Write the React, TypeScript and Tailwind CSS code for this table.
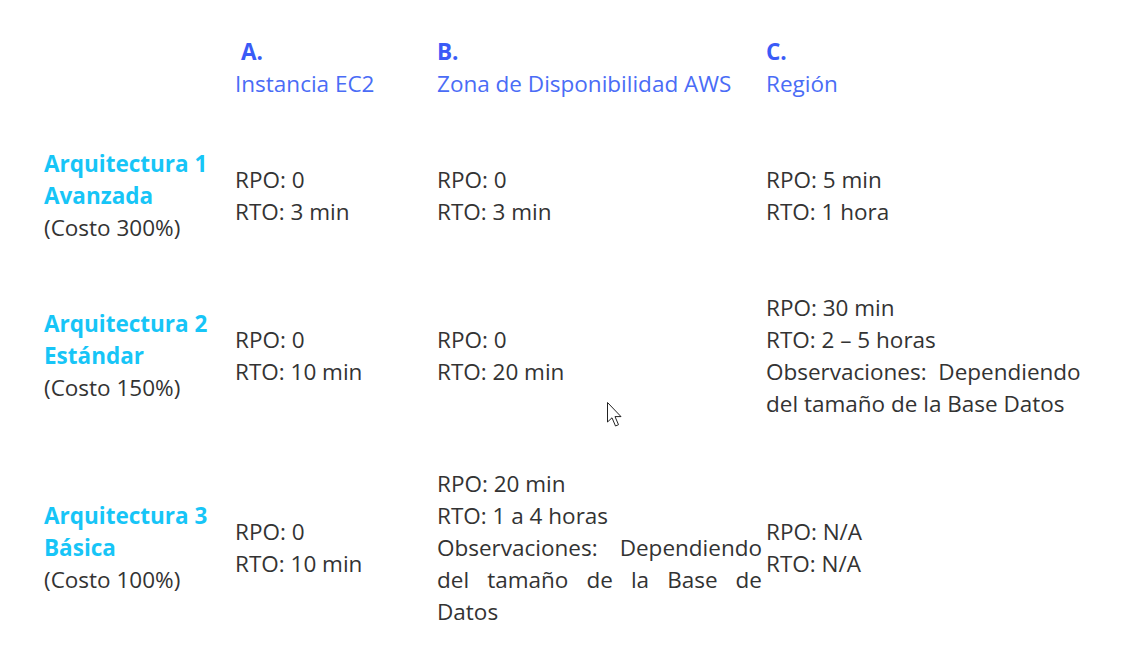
import React from "react";

const Cell = ({ lines }: { lines: string[] }) => (
  <div className="text-[#333333]">
    {lines.map((l, i) => (
      <div key={i} className="whitespace-pre">{l}</div>
    ))}
  </div>
);

const RowHead = ({ a, b, c }: { a: string; b: string; c: string }) => (
  <div>
    <div className="font-bold text-[#17c5f7]">{a}</div>
    <div className="font-bold text-[#17c5f7]">{b}</div>
    <div className="text-[#333333]">{c}</div>
  </div>
);

export default function App() {
  return (
    <div
      className="relative w-[1134px] h-[660px] bg-white overflow-hidden"
      style={{ fontFamily: '"Open Sans", "Noto Sans", sans-serif' }}
    >
      <div className="grid grid-cols-[191px_202px_329px_1fr] items-center gap-y-[48px] pl-[44px] pt-[36px] text-[22.5px] leading-[32px]">
        <div />
        <div>
          <div className="font-bold text-[#3a5bf7] pl-[6px]">A.</div>
          <div className="text-[#4a6cf6]">Instancia EC2</div>
        </div>
        <div>
          <div className="font-bold text-[#3a5bf7]">B.</div>
          <div className="text-[#4a6cf6]">Zona de Disponibilidad AWS</div>
        </div>
        <div>
          <div className="font-bold text-[#3a5bf7]">C.</div>
          <div className="text-[#4a6cf6]">Región</div>
        </div>

        <RowHead a="Arquitectura 1" b="Avanzada" c="(Costo 300%)" />
        <Cell lines={["RPO: 0", "RTO: 3 min"]} />
        <Cell lines={["RPO: 0", "RTO: 3 min"]} />
        <Cell lines={["RPO: 5 min", "RTO: 1 hora"]} />

        <RowHead a="Arquitectura 2" b="Estándar" c="(Costo 150%)" />
        <Cell lines={["RPO: 0", "RTO: 10 min"]} />
        <Cell lines={["RPO: 0", "RTO: 20 min"]} />
        <Cell
          lines={[
            "RPO: 30 min",
            "RTO: 2 – 5 horas",
            "Observaciones:  Dependiendo",
            "del tamaño de la Base Datos",
          ]}
        />

        <RowHead a="Arquitectura 3" b="Básica" c="(Costo 100%)" />
        <Cell lines={["RPO: 0", "RTO: 10 min"]} />
        <div className="text-[#333333] w-[325px]">
          <div>RPO: 20 min</div>
          <div>RTO: 1 a 4 horas</div>
          <div className="[text-align:justify] [text-align-last:justify]">Observaciones: Dependiendo</div>
          <div className="[text-align:justify] [text-align-last:justify]">del tamaño de la Base de</div>
          <div>Datos</div>
        </div>
        <Cell lines={["RPO: N/A", "RTO: N/A"]} />
      </div>

      <svg
        className="absolute left-[607px] top-[402px]"
        width="20"
        height="28"
        viewBox="0 0 20 28"
      >
        <path
          d="M0.5 0.5 L0.5 20 L5 15.8 L8.5 24 L11.5 22.7 L8 14.6 L14 14.6 Z"
          fill="white"
          stroke="#222"
          strokeWidth="1"
          strokeLinejoin="miter"
        />
      </svg>
    </div>
  );
}
